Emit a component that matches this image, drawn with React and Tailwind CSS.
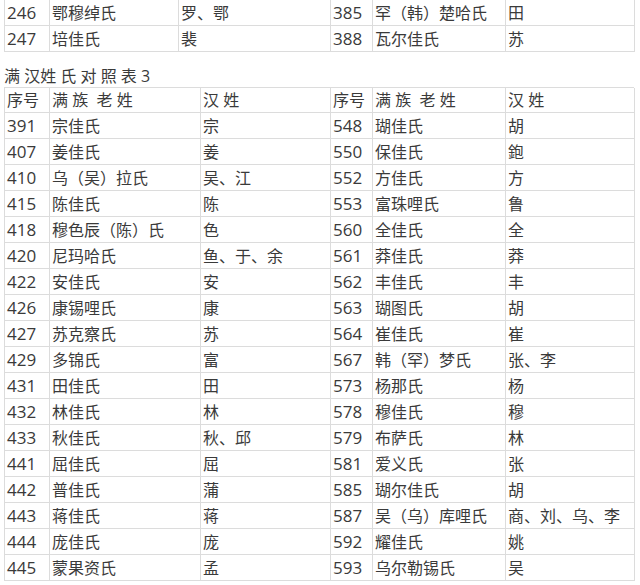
import React from 'react';

const topWidths = [45, 129, 152, 42, 133, 129];
const mainWidths = [45, 151, 130, 42, 133, 129];

const topRows = [
  ["246", "鄂穆绰氏", "罗、鄂", "385", "罕（韩）楚哈氏", "田"],
  ["247", "培佳氏", "裴", "388", "瓦尔佳氏", "苏"],
];

const header = ["序号", "满 族  老 姓", "汉 姓", "序号", "满 族  老 姓", "汉 姓"];

const rows = [
  ["391", "宗佳氏", "宗", "548", "瑚佳氏", "胡"],
  ["407", "姜佳氏", "姜", "550", "保佳氏", "鉋"],
  ["410", "乌（吴）拉氏", "吴、江", "552", "方佳氏", "方"],
  ["415", "陈佳氏", "陈", "553", "富珠哩氏", "鲁"],
  ["418", "穆色辰（陈）氏", "色", "560", "全佳氏", "全"],
  ["420", "尼玛哈氏", "鱼、于、余", "561", "莽佳氏", "莽"],
  ["422", "安佳氏", "安", "562", "丰佳氏", "丰"],
  ["426", "康锡哩氏", "康", "563", "瑚图氏", "胡"],
  ["427", "苏克察氏", "苏", "564", "崔佳氏", "崔"],
  ["429", "多锦氏", "富", "567", "韩（罕）梦氏", "张、李"],
  ["431", "田佳氏", "田", "573", "杨那氏", "杨"],
  ["432", "林佳氏", "林", "578", "穆佳氏", "穆"],
  ["433", "秋佳氏", "秋、邱", "579", "布萨氏", "林"],
  ["441", "屈佳氏", "屈", "581", "爱义氏", "张"],
  ["442", "普佳氏", "蒲", "585", "瑚尔佳氏", "胡"],
  ["443", "蒋佳氏", "蒋", "587", "吴（乌）库哩氏", "商、刘、乌、李"],
  ["444", "庞佳氏", "庞", "592", "耀佳氏", "姚"],
  ["445", "蒙果资氏", "孟", "593", "乌尔勒锡氏", "吴"],
];

// number columns (0 and 3) use slightly larger digits
const cellCls = (i) =>
  `shrink-0 flex items-center pl-[2px] border-r border-b border-[#dcdcdc] whitespace-pre overflow-hidden ${
    i === 0 || i === 3 ? 'text-[17px]' : ''
  }`;

const Row = ({ cells, widths, h = 'h-[26px]' }) => (
  <div className={`flex ${h}`}>
    {cells.map((c, i) => (
      <div key={i} style={{ width: widths[i] }} className={cellCls(i)}>
        {c}
      </div>
    ))}
  </div>
);

export default function App() {
  return (
    <div
      className="w-[640px] h-[585px] overflow-hidden bg-white text-[16px] leading-none text-[#3a3a3a]"
      style={{ fontFamily: '"Open Sans", "Noto Sans CJK SC", sans-serif' }}
    >
      <div className="ml-[4px] w-[630px] border-l border-[#dcdcdc]">
        {topRows.map((r, i) => (
          <Row key={i} cells={r} widths={topWidths} />
        ))}
      </div>
      <div className="h-[35px] ml-[4px] flex items-center pt-[12px] whitespace-pre">满 汉姓 氏 对 照 表 3</div>
      <div className="ml-[4px] w-[630px] border-t border-l border-[#dcdcdc]">
        <div className="flex h-[25px]">
          {header.map((c, i) => (
            <div
              key={i}
              style={{ width: mainWidths[i] }}
              className="shrink-0 flex items-center pl-[2px] border-r border-b border-[#dcdcdc] whitespace-pre"
            >
              {c}
            </div>
          ))}
        </div>
        {rows.map((r, i) => (
          <Row key={i} cells={r} widths={mainWidths} />
        ))}
      </div>
    </div>
  );
}
